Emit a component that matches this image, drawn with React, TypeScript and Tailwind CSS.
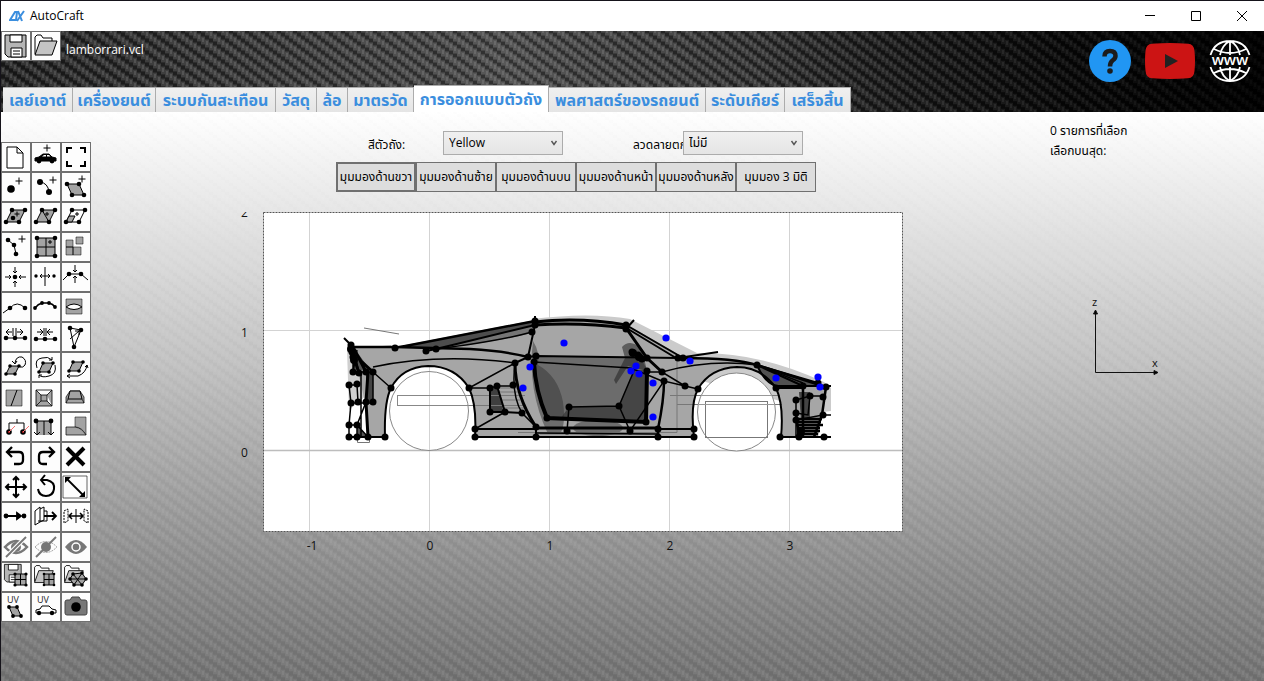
import { useState } from 'react';
import type { ReactNode } from 'react';
import clsx from 'clsx';

type Pt = [number, number];

const thaiFont = "font-['Open_Sans','Noto_Sans_Thai','Loma',sans-serif]";

const tabs = [
  { label: 'เลย์เอาต์', width: 'w-[70px]' },
  { label: 'เครื่องยนต์', width: 'w-[83px]' },
  { label: 'ระบบกันสะเทือน', width: 'w-[120px]' },
  { label: 'วัสดุ', width: 'w-[41px]' },
  { label: 'ล้อ', width: 'w-[31px]' },
  { label: 'มาตรวัด', width: 'w-[66px]' },
  { label: 'การออกแบบตัวถัง', width: 'w-[135px]' },
  { label: 'พลศาสตร์ของรถยนต์', width: 'w-[157px]' },
  { label: 'ระดับเกียร์', width: 'w-[79px]' },
  { label: 'เสร็จสิ้น', width: 'w-[66px]' },
];

const views = ['มุมมองด้านขวา', 'มุมมองด้านซ้าย', 'มุมมองด้านบน', 'มุมมองด้านหน้า', 'มุมมองด้านหลัง', 'มุมมอง 3 มิติ'];

// carbon fibre twill: 4px wide strands, each one step lower than the strand to its left
function Weave({ id, dark }: { id: string; dark?: boolean }) {
  return (
    <svg
      className={clsx(
        'absolute inset-0 h-full w-full',
        !dark && '[mask-image:linear-gradient(to_bottom,rgba(0,0,0,0.3),black)]',
      )}
      aria-hidden="true"
    >
      <defs>
        <pattern id={id} width="16" height="12" patternUnits="userSpaceOnUse">
          {[0, 1, 2, 3].map((i) =>
            [-12, 0].map((o) => (
              <g key={`${i}${o}`} fill="#fff">
                <rect x={i * 4} y={i * 3 + o} width="4" height="7" opacity={dark ? 0.09 : 0.06} />
                <rect x={i * 4 + 1} y={i * 3 + o + 1} width="2" height="4" opacity={dark ? 0.11 : 0.06} />
                <rect x={i * 4} y={i * 3 + o + 8} width="4" height="3" fill="#000" opacity={dark ? 0.3 : 0.02} />
              </g>
            )),
          )}
        </pattern>
      </defs>
      <rect width="100%" height="100%" fill={`url(#${id})`} />
    </svg>
  );
}

function Dots({ pts, r = 2.3, fill = '#000' }: { pts: Pt[]; r?: number; fill?: string }) {
  return <>{pts.map(([x, y], i) => <circle key={i} cx={x} cy={y} r={r} fill={fill} stroke="none" />)}</>;
}

function Plus({ x, y, s = 3.5 }: { x: number; y: number; s?: number }) {
  return <path d={`M${x - s} ${y}h${s * 2}M${x} ${y - s}v${s * 2}`} />;
}

const G = '#a3a3a3';

const floppy = (
  <>
    <path d="M3 3H24V25H6L3 22Z" fill="#b5b5b5" />
    <path d="M8 3H20V10H8Z" fill="#fff" />
    <path d="M9 16H20V25H9Z" fill="#fff" />
    <path d="M11 19h7M11 22h7" />
  </>
);
const folder = (
  <>
    <path d="M3 22V5L5 3H9L11 6H20V9" fill="#fff" />
    <path d="M8 9H25L20 23H3Z" fill="#c4c4c4" />
  </>
);
const slantPts: Pt[] = [[10, 7], [23, 7], [17, 19], [4, 19]];

const tools: { name: string; icon: ReactNode }[] = [
  { name: 'ใหม่', icon: <path d="M5 4H15L21 10V25H5ZM15 4V10H21" fill="#fff" /> },
  {
    name: 'เพิ่มรถ',
    icon: (
      <>
        <Plus x={15} y={5} />
        <path d="M3 18V15L7 14L11 11H17L20 14L24 15V18Z" fill="#000" />
        <path d="M10 13.500L12 12H14V13.500ZM15 12H17L18.500 13.500H15Z" fill="#fff" stroke="none" />
        <Dots pts={[[7, 18], [20, 18]]} r={2.4} />
      </>
    ),
  },
  { name: 'ซูมพอดี', icon: <path d="M5 10V5H10M18 5H23V10M23 18V23H18M10 23H5V18" strokeWidth="2" /> },
  { name: 'เพิ่มจุด', icon: <><Dots pts={[[9, 16]]} r={3.8} /><Plus x={17} y={8} /></> },
  { name: 'เพิ่มเส้น', icon: <><Dots pts={[[8, 9], [17, 19]]} r={3} /><path d="M8 9Q16 10 17 19" /><Plus x={21} y={7} /></> },
  { name: 'เพิ่มพื้นผิว', icon: <><path d="M5 11H17L22 22H10Z" fill={G} /><Dots pts={[[5, 11], [17, 11], [22, 22], [10, 22]]} /><Plus x={20} y={6} /></> },
  { name: 'เพิ่มจุดบนผิว', icon: <><path d="M10 7H23L17 19H4Z" fill={G} /><Dots pts={[...slantPts, [11, 15]]} /><Plus x={15} y={11} s={2.5} /></> },
  { name: 'แบ่งสามเหลี่ยม', icon: <><path d="M10 7H23L17 19H4ZM10 7L17 19" fill={G} /><Dots pts={slantPts} /><Plus x={15} y={11} s={2} /></> },
  { name: 'ตัดผิว', icon: <><path d="M10 7H23L17 19H4Z" fill="#fff" /><path d="M7 13H13L10 19H4Z" fill={G} /><Dots pts={slantPts} /><Plus x={15} y={11} s={2} /></> },
  { name: 'ต่อเส้น', icon: <><path d="M6 7L12 12L14 21" /><Dots pts={[[6, 7], [12, 12], [14, 21]]} /><Plus x={20} y={6} /></> },
  { name: 'ตาราง', icon: <><path d="M5 5H23V23H5ZM14 5V23M5 14H23" fill={G} /><Dots pts={[[5, 5], [23, 5], [23, 23], [5, 23]]} /><Plus x={18} y={9} s={2} /></> },
  { name: 'แยกชิ้น', icon: <><path d="M4 7H11V14H19V22H4Z" fill={G} strokeWidth=".5" /><path d="M11 14V22M4 14H11" /><path d="M14 4H21V11H14Z" fill={G} strokeWidth=".5" /></> },
  { name: 'รวมจุด', icon: <><Dots pts={[[13, 14]]} /><path d="M3 14H9M7 12L9 14L7 16M24 14H17M19 12L17 14L19 16M13 4V10M11 8L13 10L15 8M13 24V18M11 20L13 18L15 20" /></> },
  { name: 'แยกจุด', icon: <><Dots pts={[[4, 13], [22, 13]]} r={1.7} /><path d="M13 4V23M8 13H18M10 11L8 13L10 15M16 11L18 13L16 15" /></> },
  { name: 'รวมเส้น', icon: <><path d="M1 17L7 11H19L26 17M13 2V9M11 7L13 9L15 7M13 20V13M11 15L13 13L15 15" /><Dots pts={[[7, 11], [19, 11]]} /></> },
  { name: 'เส้นโค้ง', icon: <><path d="M1 20L8 15Q15 7 23 15" /><Dots pts={[[8, 15], [23, 15]]} /></> },
  { name: 'เส้นโค้งเรียบ', icon: <><path d="M3 15Q6 11 10 10H17Q21 11 23 14" strokeWidth="1.500" /><Dots pts={[[3, 15], [10, 10], [17, 10], [23, 14]]} r={1.9} /></> },
  { name: 'เจาะช่อง', icon: <><path d="M4 6H20V21H4Z" fill={G} strokeWidth=".5" /><path d="M4 14Q12 8 20 14Q12 19 4 14Z" fill="#fff" /></> },
  { name: 'ขยายเส้น', icon: <><path d="M4 15H23M4 9H10M7 6L4 9L7 12M11 5V13M14 5V13M15 9H21M18 6L21 9L18 12" /><Dots pts={[[4, 15], [13, 15], [23, 15]]} /></> },
  { name: 'ย่อเส้น', icon: <><path d="M4 16H23M5 9H11M8 6L11 9L8 12M12 5V13M14 5V13M21 9H15M18 6L15 9L18 12" /><Dots pts={[[4, 16], [13, 16], [23, 16]]} /></> },
  { name: 'หมุนจุด', icon: <><path d="M8 5L19 7L12 24ZM8 16L17 8M13 8H17V12" /><Dots pts={[[8, 5], [19, 7], [12, 24]]} /></> },
  { name: 'หมุนผิว', icon: <><path d="M8 13H17L13 21H4Z" fill={G} /><Dots pts={[[8, 13], [17, 13], [13, 21], [4, 21]]} r={1.8} /><path d="M13 10Q14 3 20 4Q25 7 23 12Q21 15 18 14M10 8L13 11L15 8" /></> },
  { name: 'หมุนรอบศูนย์', icon: <><path d="M11 10H21L17 19H7Z" fill={G} /><Dots pts={[[11, 10], [21, 10], [17, 19], [7, 19]]} r={1.8} /><path d="M5 15Q2 6 10 5Q16 3 20 7M20 4V7H17M23 12Q25 21 17 23Q10 25 7 22M7 25V22H10" /></> },
  { name: 'เลื่อนหมุน', icon: <><path d="M11 9H21L17 18H7Z" fill={G} /><Dots pts={[[11, 9], [21, 9], [17, 18], [7, 18]]} r={1.8} /><path d="M5 23H16Q24 20 25 12M8 21L5 23L8 25M23 14L25 12L26 15" /></> },
  { name: 'ตัดเฉียง', icon: <><path d="M4 7H20V23H4Z" fill={G} strokeWidth=".5" /><path d="M15 7L9 23" /></> },
  { name: 'ยื่นเข้า', icon: <><path d="M4 7H20V23H4ZM4 7L9 12H15L20 7M9 12V18L4 23M15 12V18L20 23M9 18H15" fill={G} strokeWidth=".8" /></> },
  { name: 'ยื่นออก', icon: <><path d="M4 20V14L8 8H18L22 14V20Z" fill={G} strokeWidth=".7" /><path d="M8 8H18L20 16H6Z" fill={G} /><path d="M6 16L4 20M20 16L22 20" strokeWidth=".7" /></> },
  { name: 'ตัดเชื่อม', icon: <><path d="M15 6V10M7 18V10H22V18" /><Dots pts={[[7, 19], [21, 19]]} r={2.8} /><Dots pts={[[7, 19], [21, 19]]} r={1} fill="#b91c1c" /><path d="M7 19L13 13M21 19L27 13" stroke="#f87171" /></> },
  { name: 'ฉายลง', icon: <><path d="M5 8H19V22H5Z" fill={G} stroke="none" /><path d="M3 8H19M5 8V22M12 8V22M19 8V22M2 19L5 22L8 19M16 19L19 22L22 19" /><Dots pts={[[4, 8], [19, 8]]} r={2.4} /></> },
  { name: 'ตัดพื้นผิว', icon: <><path d="M13 4H24V22Q20 14 13 14Z" fill={G} strokeWidth=".5" /><path d="M4 14H13Q20 15 24 22H4Z" fill={G} strokeWidth=".7" /></> },
  { name: 'เลิกทำ', icon: <path d="M5 9H17Q21 9 21 13V17Q21 21 17 21H12M10 4L5 9L10 14" strokeWidth="2.300" /> },
  { name: 'ทำซ้ำ', icon: <path d="M22 9H11Q7 9 7 13V17Q7 21 11 21H15M17 4L22 9L17 14" strokeWidth="2.300" /> },
  { name: 'ลบ', icon: <path d="M5 5L22 22M22 5L5 22" strokeWidth="4" /> },
  { name: 'ย้าย', icon: <path d="M14 4V24M4 14H24M11 7L14 4L17 7M11 21L14 24L17 21M7 11L4 14L7 17M21 11L24 14L21 17" strokeWidth="2" /> },
  { name: 'หมุน', icon: <path d="M9 7H15Q23 9 22 16Q21 23 14 23Q7 23 6 16M13 2L9 7L13 12" strokeWidth="2" /> },
  { name: 'ปรับขนาด', icon: <><path d="M1 3H25V25H1Z" strokeWidth=".6" /><path d="M4 5L22 23" strokeWidth="1.800" /><path d="M3 4H9L3 10ZM23 24H17L23 18Z" fill="#000" stroke="none" /></> },
  { name: 'จัดแนว', icon: <><path d="M4 13H19M15 10L19 13L15 16Z" strokeWidth="1.800" fill="#000" /><Dots pts={[[4, 13], [22, 13]]} r={2.4} /></> },
  { name: 'ดึงผิว', icon: <><path d="M3 8L8 4V19L3 22ZM8 6L12 4V17L8 19" fill="#fff" /><path d="M12 8H15V18H6" /><path d="M12 13H24M20 9L24 13L20 17" strokeWidth="1.800" /></> },
  { name: 'สะท้อน', icon: <><path d="M2 8L6 6V18L2 20ZM26 8L22 6V18L26 20Z" strokeDasharray="2 1" /><path d="M7 13H21M10 10L7 13L10 16M18 10L21 13L18 16" strokeWidth="1.500" /><path d="M14 6V20" /></> },
  { name: 'ซ่อน', icon: <><path d="M3 14Q14 2 25 14Q14 26 3 14Z" stroke="#777" strokeWidth="2.500" /><circle cx="14" cy="14" r="5" fill="#777" stroke="none" /><path d="M4 24L24 4" stroke="#fff" strokeWidth="4" /><path d="M4 24L24 4" stroke="#777" strokeWidth="2" /></> },
  { name: 'ซ่อนบางส่วน', icon: <><path d="M3 14Q14 3 25 14Q14 25 3 14Z" stroke="#999" strokeDasharray="2 1" /><circle cx="14" cy="14" r="5" fill="#777" stroke="none" /><path d="M4 24L24 4" stroke="#777" strokeWidth="2" /></> },
  { name: 'แสดง', icon: <><path d="M3 14Q14 0 25 14Q14 28 3 14Z" fill="#777" stroke="none" /><circle cx="14" cy="14" r="4" fill="#777" stroke="#fff" strokeWidth="1.500" /></> },
  { name: 'บันทึกชิ้นส่วน', icon: <><g transform="translate(0 -1) scale(.8)">{floppy}</g><path d="M13 11H24V22H13ZM18.500 11V22M13 16.500H24" fill={G} /><Dots pts={[[13, 11], [24, 11], [24, 22], [13, 22]]} r={1.6} /></> },
  { name: 'เปิดชิ้นส่วน', icon: <><g transform="scale(.85)">{folder}</g><path d="M12 11H22V22H12ZM17 11V22M12 16.500H22" fill={G} /><Dots pts={[[12, 11], [22, 11], [22, 22], [12, 22]]} r={1.3} /></> },
  { name: 'เปิดตาข่าย', icon: <><g transform="scale(.85)">{folder}</g><path d="M11 11L20 10L24 16L20 22L12 22L8 16ZM11 11L20 22M20 10L12 22M8 16H24" fill={G} /><Dots pts={[[11, 11], [20, 10], [24, 16], [20, 22], [12, 22], [8, 16]]} r={1.8} /></> },
  { name: 'UV ผิว', icon: <><text x="5" y="10" fontSize="9" fill="#222" stroke="none">UV</text><path d="M7 14H15L19 23H11Z" fill={G} /><Dots pts={[[7, 14], [15, 14], [19, 23], [11, 23]]} r={1.9} /></> },
  { name: 'UV รถ', icon: <><text x="5" y="10" fontSize="9" fill="#222" stroke="none">UV</text><path d="M4 20V17L8 16L10 13H17L20 16L24 17V20Z" fill="#fff" /><Dots pts={[[7, 20], [20, 20]]} r={2.2} /></> },
  { name: 'ถ่ายภาพ', icon: <><path d="M3 9Q3 7 5 7H8L10 4H17L19 7H23Q25 7 25 9V20Q25 22 23 22H5Q3 22 3 20Z" fill="#777" stroke="#444" /><Dots pts={[[14, 14]]} r={4.8} /></> },
];

function ToolButton({ name, children }: { name: string; children: ReactNode }) {
  return (
    <button aria-label={name} className="h-[30px] w-[30px] border border-[#707070] bg-[#fdfdfd]">
      <svg viewBox="0 0 28 28" className="h-7 w-7 font-['Open_Sans',sans-serif]" fill="none" stroke="#000">
        {children}
      </svg>
    </button>
  );
}

const carPoints: Pt[] = [
  [351, 345], [352, 352], [353, 357], [353, 372], [359, 373], [366, 372], [373, 372], [349, 385], [357, 384],
  [351, 403], [358, 402], [366, 402], [373, 402], [349, 425], [357, 425], [349, 437], [357, 437], [368, 437], [385, 437],
  [395, 348], [426, 351], [436, 349], [391, 388], [469, 388], [475, 429], [475, 437],
  [535, 321], [535, 325], [532, 332], [528, 357], [536, 356], [534, 362], [515, 363],
  [490, 388], [497, 386], [513, 385], [490, 412], [505, 412], [522, 413],
  [536, 427], [536, 437], [547, 418], [567, 431], [569, 407], [619, 406], [630, 431], [646, 422],
  [626, 325], [626, 329], [632, 352], [638, 355], [642, 359], [647, 358], [647, 371], [662, 372], [664, 381],
  [658, 429], [658, 437], [694, 429], [694, 437], [685, 386], [698, 389], [678, 358], [683, 358],
  [757, 365], [776, 388], [803, 386], [818, 383], [826, 387], [796, 400], [810, 396], [823, 397],
  [796, 413], [796, 420], [823, 415], [780, 437], [799, 437], [824, 437],
];

const bluePoints: Pt[] = [
  [564, 343], [530, 367], [523, 388], [636, 366], [631, 371], [639, 374], [653, 383], [653, 417],
  [666, 338], [690, 361], [776, 378], [818, 377], [820, 387],
];

function CarPlot() {
  return (
    <svg
      viewBox="232 212 671 344"
      className="h-[344px] w-[671px] font-['Open_Sans',sans-serif]"
      fill="none"
      stroke="#000"
      role="img"
      aria-label="lamborrari.vcl"
    >
      <rect x="263.5" y="212.5" width="639" height="319" fill="#fff" stroke="none" />
      <path d="M309.500 213V531M429.500 213V531M549.500 213V531M669.500 213V531M789.500 213V531M264 330.500H902" stroke="#d3d3d3" />
      <path d="M264 450.500H902" stroke="#bdbdbd" strokeWidth="1.500" />
      <rect x="263.5" y="212.5" width="639" height="319" stroke="#555" strokeDasharray="2 1" />

      <g stroke="none">
        <path d="M532 319Q590 312 630 319L697 353Q760 352 824 382L831 388V411L823 412L620 360Z" fill="#cbcbcb" />
        <path d="M347 350L391 345V375L349 410Z" fill="#cfcfcf" />
        <path
          d="M350 347H395L535 320Q590 316 628 325L683 357Q730 357 757 364L825 387L823 412L818 437H781Q784 405 776 388Q761 367 737 367Q710 368 698 389Q690 404 694 437H475Q477 405 469 388Q455 366 428 366Q402 367 391 388Q384 402 385 437H368L365 402L358 372Z"
          fill="#a6a6a6"
        />
        <path d="M401 347L535 321L533 331L438 350Z" fill="#4d4d4d" />
        <path d="M436 349L535 325L532 333Q490 343 436 349Z" fill="#757575" />
        <path d="M536 357L640 357L648 371L647 422L547 418Q534 385 536 357Z" fill="#6c6c6c" />
        <path d="M569 407L619 406L634 370H648V422L560 419Z" fill="#454545" />
        <path d="M533 341Q540 352 538 365Q558 376 563 402Q566 425 560 434H548Q527 390 533 341Z" fill="#333" opacity=".5" />
        <ellipse cx="598" cy="428" rx="25" ry="8" fill="#333" opacity=".5" />
        <path d="M622 347Q630 338 642 349L647 371L628 366L616 384L614 380L625 358Z" fill="#222" opacity=".55" />
        <path d="M490 388L498 386L505 412H490Z" fill="#3f3f3f" />
        <path d="M757 366L820 385L803 386L776 387Q764 382 757 366Z" fill="#515151" />
        <path d="M366 372H373V402H366Z" fill="#444" />
        <path d="M352 345L370 370H354Z" fill="#555" />
        <path d="M799 392H810V420H801Z" fill="#444" />
        <path d="M357 425L368 437H357Z" fill="#555" />
      </g>

      <g stroke="#777">
        <path d="M364 328L399 334M357.500 438V442.500H369.500V438" />
        <path d="M397.500 395.500H525M397.500 405.500H525M397.500 395V406M518 432.500H677V358M670 395.500H780M677 404.500H782M500 388H518M500 392H518M501 400H520M502 408H524M540 434H660" />
      </g>
      <circle cx="429" cy="411" r="39.500" fill="#fff" stroke="#888" />
      <path d="M429.500 372V450" stroke="#d3d3d3" />
      <path d="M397.500 395.500H468M397.500 405.500H469M397.500 395V406" stroke="#888" />
      <circle cx="736.500" cy="412" r="39" fill="#fff" stroke="#888" />
      <rect x="705.500" y="401.500" width="62" height="36" stroke="#777" />
      <path d="M702 395.500H772M699 404.500H775" stroke="#999" />

      <g strokeWidth="2">
        <path d="M385 437Q384 402 391 388Q402 367 428 366Q455 366 469 388Q477 405 475 437H694Q690 404 698 389Q710 368 737 367Q761 367 776 388Q784 405 781 437H831" />
        <path d="M344 338L352 346M426 351L436 349L535 325" />
        <path d="M535 316V325L528 357M515 363L528 357L536 356L678 358L718 352M490 412H505L522 413M497 386L505 412M490 388V412M349 437H385M626 329L634 320" />
        <path d="M475 429H536M658 429H694M536 427V437M757 365L803 386H776Q764 382 757 365L818 383M803 386H831M776 388H803" />
      </g>
      <g strokeWidth="3">
        <path d="M350 347H395L470 349Q505 351 528 357M395 348L535 321" strokeWidth="2.500" />
        <path d="M683 358Q735 358 757 365L826 387M664 381Q664 400 658 429V437" strokeWidth="2.500" />
        <path d="M535 322Q580 317 626 325M535 325Q580 322 626 328L647 358L662 372M536 428H658M515 363Q515 395 536 427M368 372L366 402L368 437" />
        <path d="M626 325L683 358M628 329L676 358" strokeWidth="2" />
        <path d="M534 362Q535 390 547 418L646 422L647 371" strokeWidth="4" />
        <path d="M351 345L361 361L373 372M352 352L359 373M352 345L366 372" strokeWidth="3" />
        <path d="M826 387L822 415L814 437M803 388V437M796 413L799 437" strokeWidth="2.500" />
      </g>
      <g strokeWidth="1.500">
        <path d="M373 367Q440 353 515 363M373 372L391 388M436 349Q500 341 532 332M469 388L515 363M469 388L490 388L497 386H513M475 429L505 412M515 363Q511 395 522 413L536 427" />
        <path d="M353 357V372H373M357 350L353 372M355 355L359 373M349 385H357L358 402M349 385L351 403H373M373 372V402M361 372V437M366 402L357 425V437M349 425V437M346 425H357L368 437M351 403L349 425" />
        <path d="M534 362L631 368L662 381M569 407L619 406L636 366M569 407L567 431M619 406L630 431L664 381L685 386L662 372H647M662 372Q710 359 757 365M685 386L698 389M632 352L647 358M536 433L658 434" />
        <path d="M796 400L810 396H823M796 400V437M810 396L808 415L796 413M823 415H831M796 420L823 415M757 365L803 383" />
      </g>
      <path d="M796 419H822M797 422H821M796 425H823M799 428H820M799 431H820M797 434H818" strokeWidth="2.500" />
      <Dots pts={carPoints} r={3.5} />
      <Dots pts={[[633, 353], [639, 357], [351, 349], [354, 360], [801, 431]]} r={4} />
      <Dots pts={bluePoints} r={3.6} fill="#0000ff" />

      <g fill="#111" stroke="none" fontSize="12">
        <clipPath id="axis-clip"><rect x="232" y="212" width="30" height="344" /></clipPath>
        <text x="241" y="217" clipPath="url(#axis-clip)">2</text>
        <text x="241" y="337">1</text>
        <text x="241" y="457">0</text>
        <g textAnchor="middle">
          <text x="312" y="550">-1</text>
          <text x="430" y="550">0</text>
          <text x="550" y="550">1</text>
          <text x="670" y="550">2</text>
          <text x="790" y="550">3</text>
        </g>
      </g>
    </svg>
  );
}

function Dropdown({ id, options }: { id: string; options: string[] }) {
  return (
    <div className="relative h-6 w-[120px]">
      <select
        id={id}
        className="h-6 w-full appearance-none border border-[#acacac] bg-linear-to-b from-[#f0f0f0] to-[#e5e5e5] pl-[5px] text-xs text-black"
      >
        {options.map((o) => <option key={o}>{o}</option>)}
      </select>
      <svg viewBox="0 0 8 6" className="pointer-events-none absolute top-[9px] right-[5px] h-[6px] w-2" fill="none" stroke="#555" strokeWidth="1.400">
        <path d="M1.500 1L4 4.500L6.500 1" />
      </svg>
    </div>
  );
}

export default function App() {
  const [tab, setTab] = useState(6);
  const [view, setView] = useState(0);

  return (
    <div className={clsx('flex min-h-screen flex-col border-t border-l border-[#15131a] bg-white text-xs text-black', thaiFont)}>
      <header className="flex h-[30px] items-center bg-white">
        <svg viewBox="0 0 16 12" className="ml-2 h-3 w-4" fill="none" stroke="#3b8ede" strokeWidth="2">
          <path d="M1 10L6 2H8L7 10Z" />
          <path d="M9 1L13 11M15 1L8 11" />
        </svg>
        <h1 className="ml-[5px] text-xs">AutoCraft</h1>
        <div className="ml-auto flex h-full">
          <button aria-label="Minimize" className="flex w-[46px] items-center justify-center">
            <svg viewBox="0 0 10 10" className="h-[10px] w-[10px]" stroke="#000"><path d="M0 4.500H10" /></svg>
          </button>
          <button aria-label="Maximize" className="flex w-[46px] items-center justify-center">
            <svg viewBox="0 0 10 10" className="h-[10px] w-[10px]" fill="none" stroke="#000"><path d="M.5 .5H9.500V9.500H.5Z" /></svg>
          </button>
          <button aria-label="Close" className="flex w-[45px] items-center justify-center">
            <svg viewBox="0 0 10 10" className="h-[10px] w-[10px]" stroke="#000"><path d="M0 0L10 10M10 0L0 10" /></svg>
          </button>
        </div>
      </header>

      <div className="relative flex h-[81px] justify-between bg-linear-to-r from-[#1f1f1f] via-[#484848] via-40% to-[#020202]">
        <Weave id="weave-dark" dark />
        <div className="absolute inset-0 bg-linear-to-r from-transparent from-60% to-black/80" />
        <div className="relative flex flex-col justify-between">
          <div className="flex items-center">
            <ToolButton name="บันทึก">{floppy}</ToolButton>
            <ToolButton name="เปิด">{folder}</ToolButton>
            <span className="ml-[5px] pt-2 text-xs text-white">lamborrari.vcl</span>
          </div>
          <div role="tablist" className="ml-[2px] flex items-end">
            {tabs.map((t, i) => (
              <button
                key={t.label}
                role="tab"
                aria-selected={tab === i}
                onClick={() => setTab(i)}
                className={clsx(
                  'flex shrink-0 items-center justify-center border-t border-r border-[#acacac] text-base leading-6 font-bold whitespace-nowrap text-[#3b8ede]',
                  t.width,
                  tab === i ? 'h-[27px] bg-white' : 'h-[25px] bg-linear-to-b from-[#f0f0f0] to-[#e5e5e5]',
                )}
              >
                {t.label}
              </button>
            ))}
          </div>
        </div>
        <div className="relative mt-2 mr-[13px] flex h-11 items-center gap-[14px]">
          <button aria-label="Help">
            <svg viewBox="0 0 42 42" className="h-[42px] w-[42px]">
              <circle cx="21" cy="21" r="21" fill="#2196f3" />
              <path d="M15.500 16.500Q15.500 11 21 11Q26.500 11 26.500 16Q26.500 18.500 23.500 20.500Q21 22.500 21 26.500" fill="none" stroke="#1c1c1c" strokeWidth="4.500" />
              <circle cx="21" cy="31" r="2.800" fill="#1c1c1c" />
            </svg>
          </button>
          <button aria-label="YouTube">
            <svg viewBox="0 0 50 36" className="h-9 w-[50px]">
              <path d="M7 .7Q25 -.7 43 .7Q49 1 49.500 8Q50.500 18 49.500 28Q49 35 43 35.300Q25 36.700 7 35.300Q1 35 .5 28Q-.5 18 .5 8Q1 1 7 .7Z" fill="#cc1414" />
              <path d="M20 11L33 18L20 25Z" fill="#222" />
            </svg>
          </button>
          <button aria-label="Website">
            <svg viewBox="0 0 42 42" className="h-[42px] w-[42px]" fill="none" stroke="#fff" strokeWidth="1.800">
              <path d="M1.500 15Q6 1 21 1Q36 1 40.500 15M1.500 27Q6 41 21 41Q36 41 40.500 27M21 1V15M21 27V41M11 15Q13 5 21 1Q29 5 31 15M11 27Q13 37 21 41Q29 37 31 27M5 9Q21 17 37 9M5 33Q21 25 37 33" />
              <text x="21" y="25" textAnchor="middle" fontSize="15" fontWeight="600" fill="#fff" stroke="none" fontFamily="Open Sans">www</text>
            </svg>
          </button>
        </div>
      </div>

      <main className="relative flex flex-1 items-start bg-linear-to-b from-white via-[#c0c0c0] via-45% to-[#6f6f6f]">
        <Weave id="weave-light" />
        <div role="toolbar" className="relative mt-[30px] grid grid-cols-[repeat(3,30px)]">
          {tools.map((t) => <ToolButton key={t.name} name={t.name}>{t.icon}</ToolButton>)}
        </div>

        <section className="relative flex flex-1 justify-center pt-[19px] pr-[6px]">
          <div className="w-[671px]">
            <div className="flex items-start pl-[136px]">
              <label htmlFor="color" className="w-[75px] pt-1.5 text-xs leading-4">สีตัวถัง:</label>
              <Dropdown id="color" options={['Yellow']} />
              <label htmlFor="trim" className="ml-[70px] w-[50px] pt-1.5 text-xs leading-4 whitespace-nowrap">ลวดลายตก</label>
              <Dropdown id="trim" options={['ไม่มี']} />
            </div>
            <div className="mt-[7px] flex pl-[104px]">
              {views.map((v, i) => (
                <button
                  key={v}
                  onClick={() => setView(i)}
                  className={clsx(
                    'flex h-[30px] w-[80px] items-center justify-center border-[#707070] bg-[#ddd] text-xs whitespace-nowrap',
                    view === i ? 'border-2' : 'border',
                  )}
                >
                  {v}
                </button>
              ))}
            </div>
            <div className="mt-5">
              <CarPlot />
            </div>
          </div>
        </section>

        <aside className="relative w-[214px] shrink-0 pt-[9px] text-xs leading-5">
          <p>0 รายการที่เลือก</p>
          <p>เลือกบนสุด:</p>
          <svg viewBox="0 0 80 84" className="mt-[133px] ml-9 h-[84px] w-20" fontSize="11" stroke="#111">
            <text x="6" y="12" fill="#111" stroke="none">z</text>
            <text x="66" y="73" fill="#111" stroke="none">x</text>
            <path d="M9.500 18V78.500H70" fill="none" />
            <path d="M9.500 16L7.500 20H11.500ZM72 78.500L68 76.500V80.500Z" fill="#000" />
          </svg>
        </aside>
      </main>
    </div>
  );
}
